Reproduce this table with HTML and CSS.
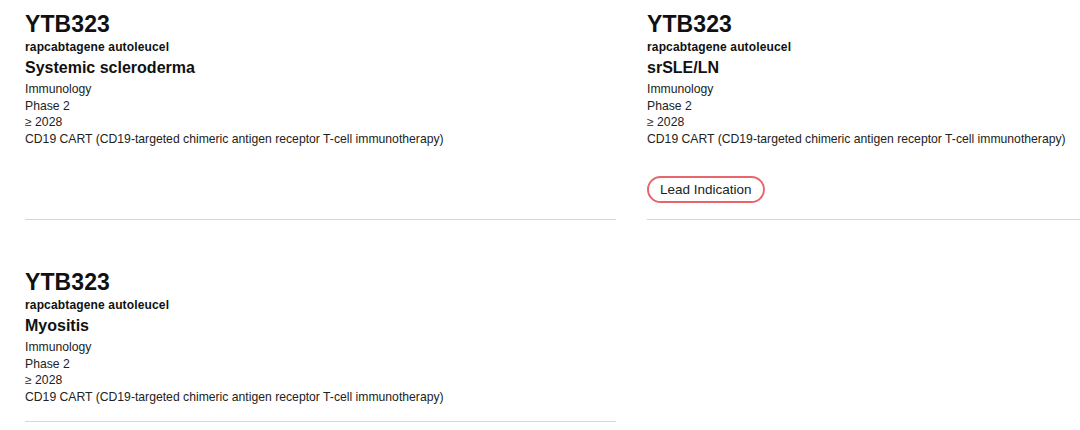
FILE: index.html
```html
<!DOCTYPE html>
<html lang="en">
<head>
<meta charset="utf-8">
<title>Pipeline</title>
<link rel="stylesheet" href="styles.css">
</head>
<body>
<div class="viewport">
<div class="grid">
  <div class="card">
    <h2 class="code">YTB323</h2>
    <p class="generic">rapcabtagene autoleucel</p>
    <h3 class="indication">Systemic scleroderma</h3>
    <ul class="meta">
      <li>Immunology</li>
      <li>Phase 2</li>
      <li>≥ 2028</li>
      <li>CD19 CART (CD19-targeted chimeric antigen receptor T-cell immunotherapy)</li>
    </ul>
  </div>
  <div class="card">
    <h2 class="code">YTB323</h2>
    <p class="generic">rapcabtagene autoleucel</p>
    <h3 class="indication">srSLE/LN</h3>
    <ul class="meta">
      <li>Immunology</li>
      <li>Phase 2</li>
      <li>≥ 2028</li>
      <li>CD19 CART (CD19-targeted chimeric antigen receptor T-cell immunotherapy)</li>
    </ul>
    <div class="tags"><span class="badge">Lead Indication</span></div>
  </div>
  <div class="card">
    <h2 class="code">YTB323</h2>
    <p class="generic">rapcabtagene autoleucel</p>
    <h3 class="indication">Myositis</h3>
    <ul class="meta">
      <li>Immunology</li>
      <li>Phase 2</li>
      <li>≥ 2028</li>
      <li>CD19 CART (CD19-targeted chimeric antigen receptor T-cell immunotherapy)</li>
    </ul>
  </div>
</div>
</div>
</body>
</html>
```
FILE: styles.css
```css
html, body {
  margin: 0;
  padding: 0;
  background: #ffffff;
}
body {
  font-family: "Liberation Sans", Arial, sans-serif;
  color: #1a1a1a;
}
.viewport {
  width: 1080px;
  overflow: hidden;
}
.grid {
  display: grid;
  grid-template-columns: 591px 591px;
  column-gap: 31px;
  row-gap: 38px;
  padding-left: 25px;
  width: max-content;
}
.card {
  display: flex;
  flex-direction: column;
  padding: 11px 0 16px;
  border-bottom: 1px solid #d6d6d6;
}
.code {
  margin: 0;
  font-size: 23px;
  line-height: 26px;
  font-weight: 700;
  color: #111;
  letter-spacing: 0.1px;
}
.generic {
  margin: 2px 0 0;
  font-size: 12px;
  line-height: 16px;
  font-weight: 700;
  color: #111;
  letter-spacing: 0.15px;
}
.indication {
  margin: 3px 0 0;
  font-size: 16px;
  line-height: 20px;
  font-weight: 700;
  color: #111;
}
.meta {
  list-style: none;
  margin: 3px 0 0;
  padding: 0;
  font-size: 12.2px;
  line-height: 16.5px;
  color: #222;
}
.tags {
  display: flex;
  margin-top: 29px;
}
.badge {
  display: inline-block;
  border: 2px solid #e8666b;
  border-radius: 14px;
  padding: 2px 11px;
  font-size: 13.5px;
  line-height: 19px;
  color: #222;
}
```
